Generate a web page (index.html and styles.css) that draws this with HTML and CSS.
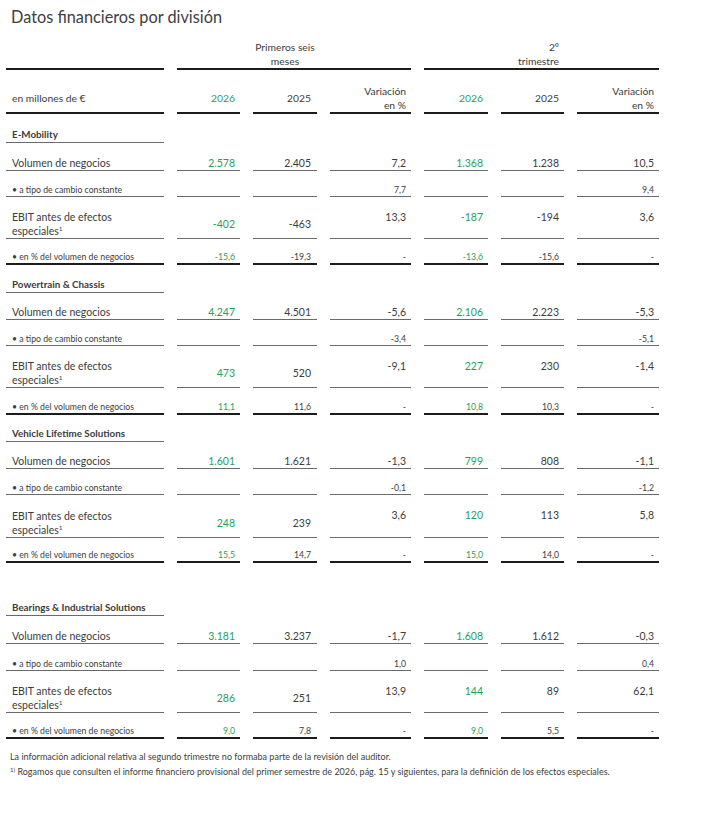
FILE: index.html
```html
<!DOCTYPE html>
<html lang="es">
<head>
<meta charset="utf-8">
<title>Datos financieros por división</title>
<link rel="stylesheet" href="styles.css">
</head>
<body>
<h1 class="title">Datos financieros por división</h1>
<div class="table">
  <div class="row hd1">
    <div class="l"></div>
    <div class="grp">
      <div></div>
      <div class="gh center">Primeros seis<br>meses</div>
      <div></div>
    </div>
    <div class="grp grp2">
      <div></div>
      <div class="gh right">2º<br>trimestre</div>
      <div></div>
    </div>
  </div>
  <div class="row hd2">
    <div class="l"><span>en millones de €</span></div>
    <div class="c g">2026</div>
    <div class="c c2">2025</div>
    <div class="c"><span>Variación<br>en %</span></div>
    <div class="c g">2026</div>
    <div class="c">2025</div>
    <div class="c"><span>Variación<br>en %</span></div>
  </div>

  <!-- E-Mobility -->
  <div class="row sec h32"><div class="l">E-Mobility</div></div>
  <div class="row vol h28">
    <div class="l">Volumen de negocios</div>
    <div class="c g">2.578</div><div class="c c2">2.405</div><div class="c">7,2</div>
    <div class="c g">1.368</div><div class="c">1.238</div><div class="c">10,5</div>
  </div>
  <div class="row tipo h26">
    <div class="l">• a tipo de cambio constante</div>
    <div class="c"></div><div class="c c2"></div><div class="c">7,7</div>
    <div class="c"></div><div class="c"></div><div class="c">9,4</div>
  </div>
  <div class="row ebit h42">
    <div class="l"><span>EBIT antes de efectos<br>especiales<sup>1</sup></span></div>
    <div class="c g mid">-402</div><div class="c c2 mid">-463</div><div class="c top">13,3</div>
    <div class="c g top">-187</div><div class="c top">-194</div><div class="c top">3,6</div>
  </div>
  <div class="row pct h26">
    <div class="l">• en % del volumen de negocios</div>
    <div class="c g">-15,6</div><div class="c c2">-19,3</div><div class="c">-</div>
    <div class="c g">-13,6</div><div class="c">-15,6</div><div class="c">-</div>
  </div>

  <!-- Powertrain & Chassis -->
  <div class="row sec h28"><div class="l">Powertrain &amp; Chassis</div></div>
  <div class="row vol h27">
    <div class="l">Volumen de negocios</div>
    <div class="c g">4.247</div><div class="c c2">4.501</div><div class="c">-5,6</div>
    <div class="c g">2.106</div><div class="c">2.223</div><div class="c">-5,3</div>
  </div>
  <div class="row tipo h26">
    <div class="l">• a tipo de cambio constante</div>
    <div class="c"></div><div class="c c2"></div><div class="c">-3,4</div>
    <div class="c"></div><div class="c"></div><div class="c">-5,1</div>
  </div>
  <div class="row ebit h42">
    <div class="l"><span>EBIT antes de efectos<br>especiales<sup>1</sup></span></div>
    <div class="c g mid">473</div><div class="c c2 mid">520</div><div class="c top">-9,1</div>
    <div class="c g top">227</div><div class="c top">230</div><div class="c top">-1,4</div>
  </div>
  <div class="row pct h27">
    <div class="l">• en % del volumen de negocios</div>
    <div class="c g">11,1</div><div class="c c2">11,6</div><div class="c">-</div>
    <div class="c g">10,8</div><div class="c">10,3</div><div class="c">-</div>
  </div>

  <!-- Vehicle Lifetime Solutions -->
  <div class="row sec h27"><div class="l">Vehicle Lifetime Solutions</div></div>
  <div class="row vol h27">
    <div class="l">Volumen de negocios</div>
    <div class="c g">1.601</div><div class="c c2">1.621</div><div class="c">-1,3</div>
    <div class="c g">799</div><div class="c">808</div><div class="c">-1,1</div>
  </div>
  <div class="row tipo h26">
    <div class="l">• a tipo de cambio constante</div>
    <div class="c"></div><div class="c c2"></div><div class="c">-0,1</div>
    <div class="c"></div><div class="c"></div><div class="c">-1,2</div>
  </div>
  <div class="row ebit h43">
    <div class="l"><span>EBIT antes de efectos<br>especiales<sup>1</sup></span></div>
    <div class="c g mid">248</div><div class="c c2 mid">239</div><div class="c top">3,6</div>
    <div class="c g top">120</div><div class="c top">113</div><div class="c top">5,8</div>
  </div>
  <div class="row pct h25">
    <div class="l">• en % del volumen de negocios</div>
    <div class="c g">15,5</div><div class="c c2">14,7</div><div class="c">-</div>
    <div class="c g">15,0</div><div class="c">14,0</div><div class="c">-</div>
  </div>

  <div class="row spacer"></div>

  <!-- Bearings & Industrial Solutions -->
  <div class="row sec h28"><div class="l">Bearings &amp; Industrial Solutions</div></div>
  <div class="row vol h28">
    <div class="l">Volumen de negocios</div>
    <div class="c g">3.181</div><div class="c c2">3.237</div><div class="c">-1,7</div>
    <div class="c g">1.608</div><div class="c">1.612</div><div class="c">-0,3</div>
  </div>
  <div class="row tipo h27">
    <div class="l">• a tipo de cambio constante</div>
    <div class="c"></div><div class="c c2"></div><div class="c">1,0</div>
    <div class="c"></div><div class="c"></div><div class="c">0,4</div>
  </div>
  <div class="row ebit h42">
    <div class="l"><span>EBIT antes de efectos<br>especiales<sup>1</sup></span></div>
    <div class="c g mid">286</div><div class="c c2 mid">251</div><div class="c top">13,9</div>
    <div class="c g top">144</div><div class="c top">89</div><div class="c top">62,1</div>
  </div>
  <div class="row pct h26">
    <div class="l">• en % del volumen de negocios</div>
    <div class="c g">9,0</div><div class="c c2">7,8</div><div class="c">-</div>
    <div class="c g">9,0</div><div class="c">5,5</div><div class="c">-</div>
  </div>
</div>
<div class="notes">
  <p>La información adicional relativa al segundo trimestre no formaba parte de la revisión del auditor.</p>
  <p><sup>1)</sup> Rogamos que consulten el informe financiero provisional del primer semestre de 2026, pág. 15 y siguientes, para la definición de los efectos especiales.</p>
</div>
</body>
</html>
```
FILE: styles.css
```css
* { box-sizing: border-box; }

body {
  margin: 0;
  background: #ffffff;
  font-family: Lato, "Open Sans", "DejaVu Sans", sans-serif;
  color: #3c3c3c;
}

.title {
  margin: 0;
  height: 32px;
  padding: 7px 0 0 11px;
  font-size: 16.3px;
  font-weight: 400;
  line-height: 20px;
  color: #404040;
}

.table {
  padding-left: 6px;
}

.row {
  display: grid;
  grid-template-columns: 158px 63px 64px 81px 64px 63px 82px;
  column-gap: 13px;
}

.row > .l,
.row > .c {
  display: flex;
  align-items: flex-end;
  border-bottom: 1px solid #6a6a6a;
  line-height: 13px;
  white-space: nowrap;
}

.row > .l {
  padding-left: 6px;
  justify-content: flex-start;
}

.row > .c {
  justify-content: flex-end;
  text-align: right;
  padding-right: 5px;
}

.row > .c.c2 { padding-right: 6px; }

.g { color: #1f9f5a; }

/* header rows */
.hd1 {
  height: 38px;
  font-size: 10.3px;
}
.hd1 > .l {
  border-bottom: 2px solid #1c1c1c;
}
.grp {
  grid-column: span 3;
  display: grid;
  grid-template-columns: 63px 64px 81px;
  column-gap: 13px;
  align-items: end;
  border-bottom: 2px solid #1c1c1c;
}
.grp2 {
  grid-template-columns: 64px 63px 82px;
}
.gh {
  line-height: 14px;
}
.gh.center { text-align: center; }
.gh.right { text-align: right; padding-right: 5px; }

.hd2 {
  height: 41px;
  font-size: 10.3px;
}
.hd2 > .l,
.hd2 > .c {
  align-items: center;
  padding-top: 14px;
  line-height: 14px;
  border-bottom: 2px solid #1c1c1c;
}

/* row heights */
.h25 { height: 25px; }
.h26 { height: 26px; }
.h27 { height: 27px; }
.h28 { height: 28px; }
.h32 { height: 32px; }
.h42 { height: 42px; }
.h43 { height: 43px; }
.spacer { height: 25px; }

/* section header */
.sec > .l {
  font-weight: 700;
  font-size: 9.8px;
  line-height: 14px;
  padding-bottom: 1px;
}

.vol { font-size: 10.5px; }
.tipo { font-size: 8.7px; }
.pct { font-size: 8.7px; }
.pct > .l,
.pct > .c {
  border-bottom: 2px solid #1c1c1c;
}

.ebit { font-size: 10.5px; }
.ebit > .l,
.ebit > .c {
  padding-top: 13px;
  line-height: 14px;
}
.ebit > .c.mid { align-items: center; }
.ebit > .c.top { align-items: flex-start; }

.ebit sup {
  font-size: 6.5px;
  line-height: 0;
  vertical-align: 4px;
}

.notes {
  padding: 10px 0 0 10px;
  font-size: 9px;
  line-height: 15px;
  color: #404040;
}
.notes p {
  margin: 0;
}
.notes sup {
  font-size: 6px;
  line-height: 0;
  vertical-align: 3px;
}
```
